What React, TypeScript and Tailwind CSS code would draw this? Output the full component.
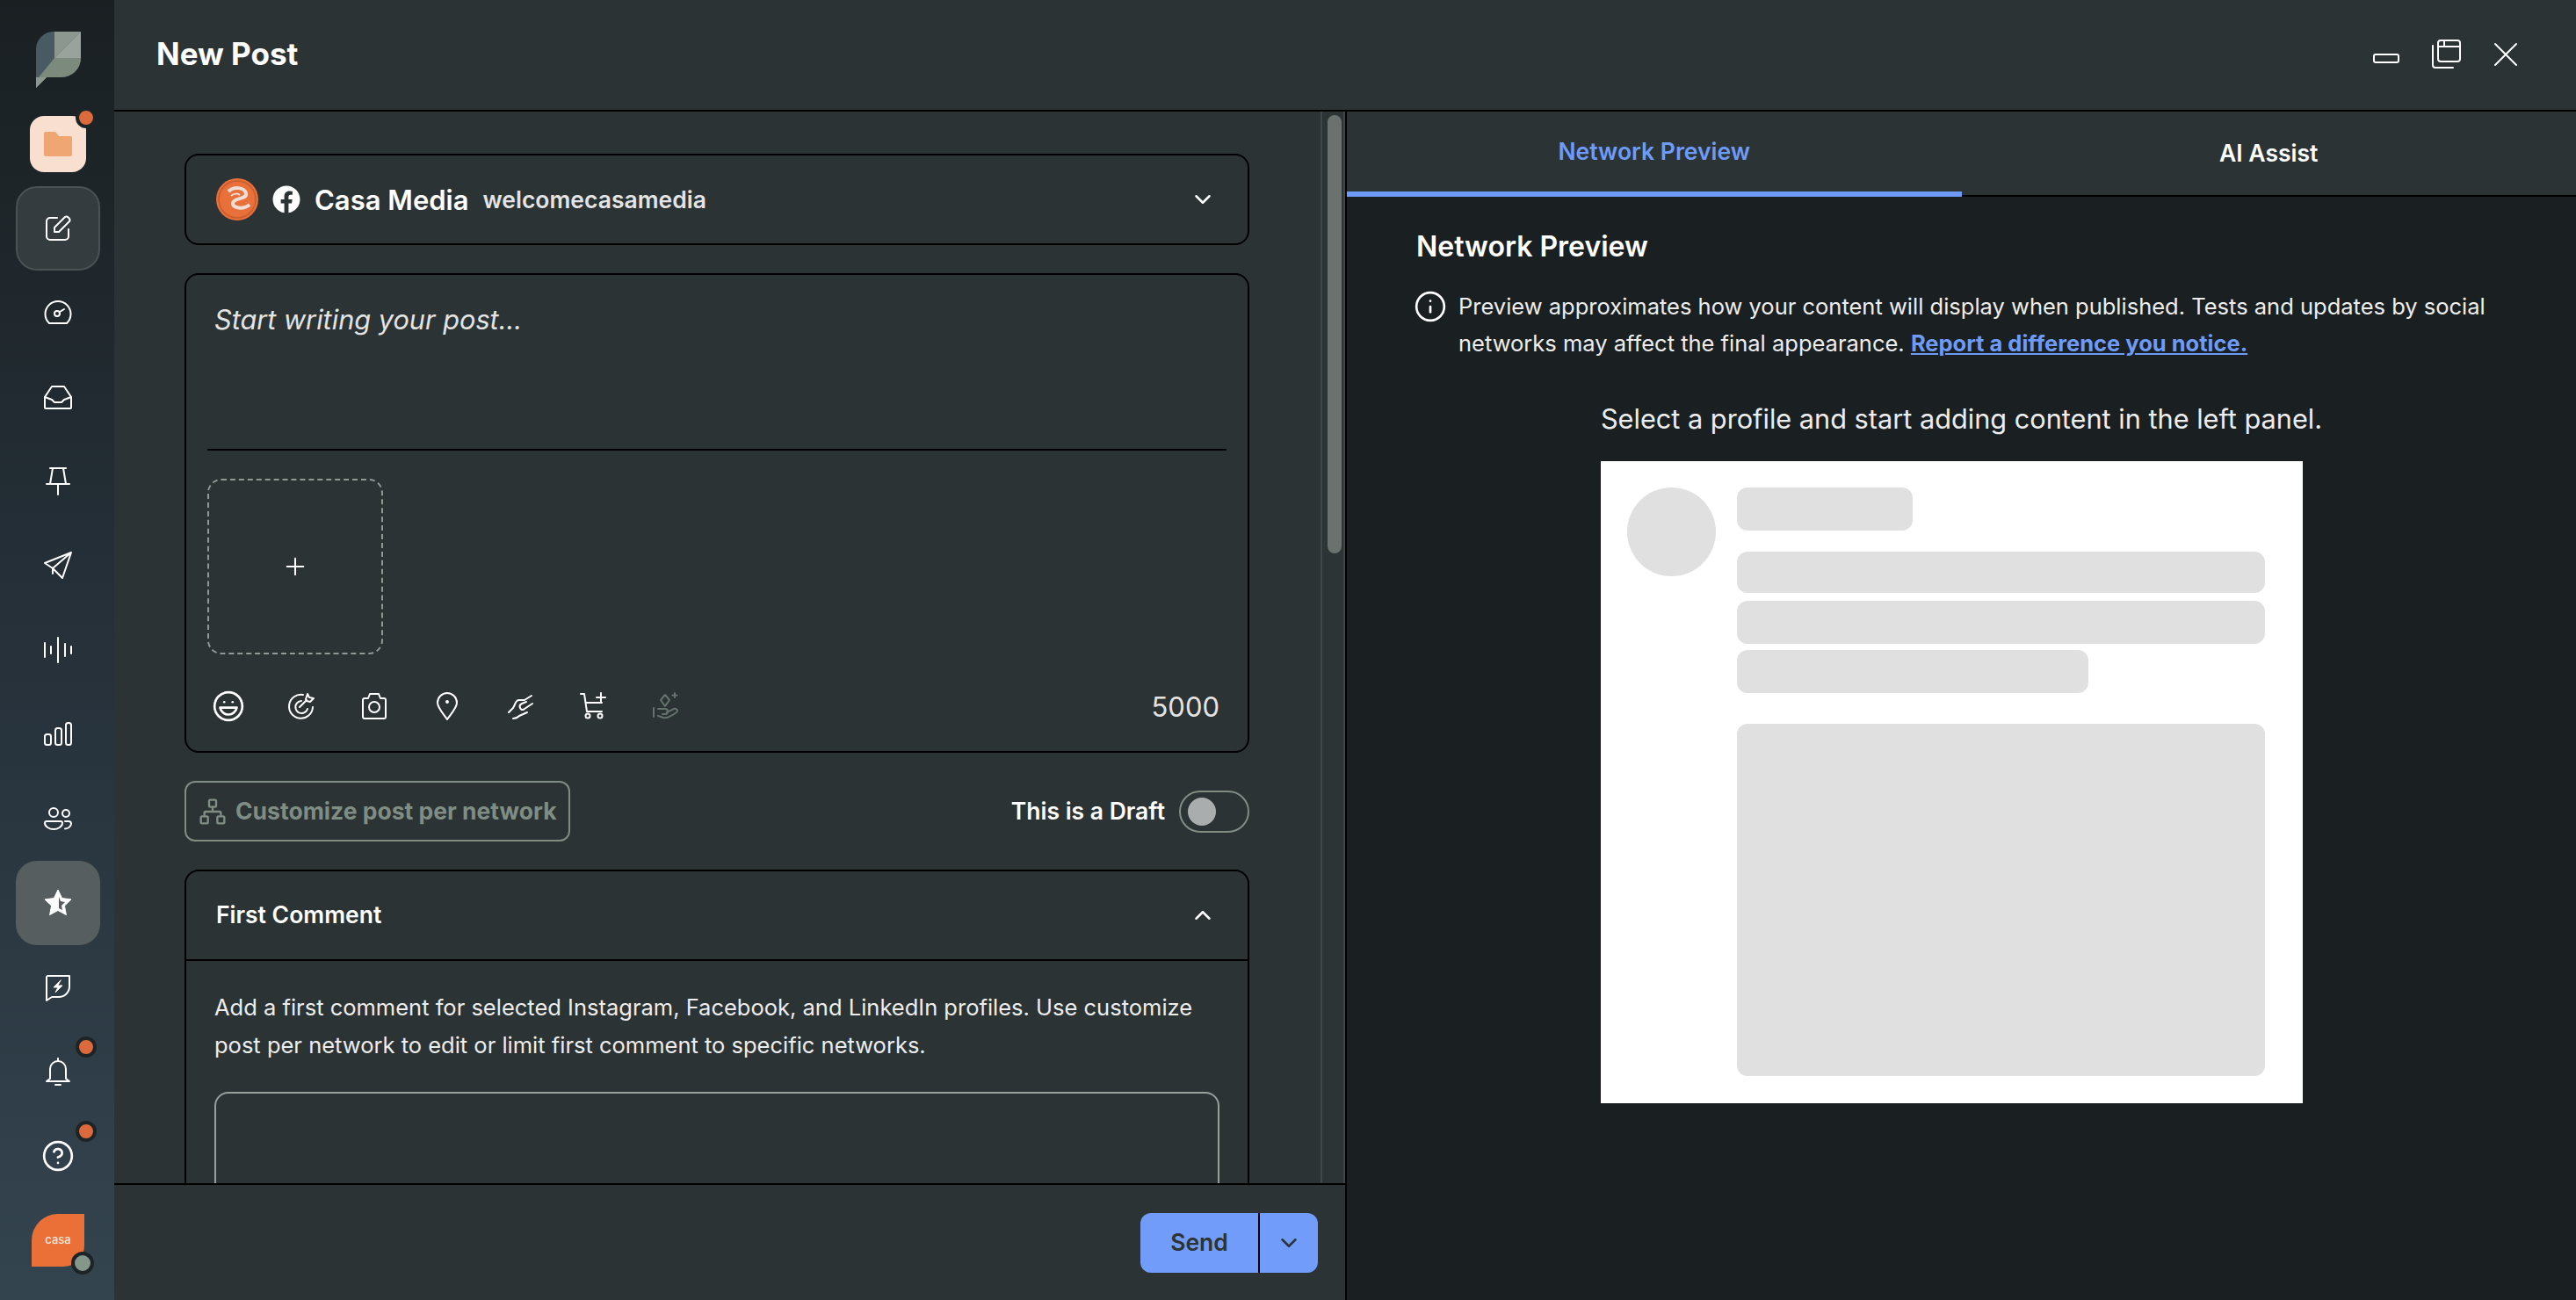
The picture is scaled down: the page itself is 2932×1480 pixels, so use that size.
import type { ReactNode } from "react";
import { ChevronDown, ChevronUp, CircleHelp, Info, Laugh, Network, Plus } from "lucide-react";
import { FaFacebook } from "react-icons/fa";

function Icon({ children, className = "text-white" }: { children: ReactNode; className?: string }) {
  return (
    <svg
      viewBox="0 0 32 32"
      fill="none"
      stroke="currentColor"
      strokeWidth="2"
      strokeLinecap="round"
      strokeLinejoin="round"
      className={`h-8 w-8 shrink-0 ${className}`}
    >
      {children}
    </svg>
  );
}

function Logo() {
  const leaf = "M20 0H52V30A22 22 0 0 1 30 52H13L1 64V20A20 20 0 0 1 20 0Z";
  return (
    <svg viewBox="0 0 52 64" className="h-16 w-[52px]">
      <clipPath id="leaf">
        <path d={leaf} />
      </clipPath>
      <g clipPath="url(#leaf)">
        <rect width="52" height="64" fill="#4a5a63" />
        <polygon points="22,0 52,0 22,30" fill="#8c978f" />
        <polygon points="52,0 52,30 22,30" fill="#99a39b" />
        <polygon points="52,30 52,64 0,64 4,52 22,30" fill="#7b8a7d" />
        <polygon points="0,52 14,52 1,64" fill="#8c978f" />
      </g>
    </svg>
  );
}

function Badge({ className }: { className: string }) {
  return <span className={`absolute h-6 w-6 rounded-full border-4 border-[#1c2427] bg-[#dc6a3c] ${className}`} />;
}

function NavItem({ children, badge }: { children: ReactNode; badge?: string }) {
  return (
    <div className="relative flex h-24 w-full items-center justify-center">
      {children}
      {badge && <Badge className={badge} />}
    </div>
  );
}

function Sidebar() {
  return (
    <aside className="flex h-full w-[130px] shrink-0 flex-col items-center bg-linear-to-b from-[#1a2022] via-[#26313a] to-[#34444f] pt-5 pl-0.5">
      <NavItem>
        <Logo />
      </NavItem>
      <NavItem badge="left-[84px] top-[6px]">
        <div className="flex h-16 w-16 items-center justify-center rounded-2xl bg-[#f8dfd0]">
          <svg viewBox="0 0 32 28" className="h-7 w-8" fill="#efa672">
            <path d="M0 2a2 2 0 0 1 2-2h11l4 5h13a2 2 0 0 1 2 2v19a2 2 0 0 1-2 2H2a2 2 0 0 1-2-2z" />
          </svg>
        </div>
      </NavItem>
      <NavItem>
        <div className="flex h-24 w-24 items-center justify-center rounded-3xl border-2 border-[#4a5255] bg-[#343c3f]">
          <Icon>
            <path d="M15 4H7a4 4 0 0 0-4 4v17a4 4 0 0 0 4 4h17a4 4 0 0 0 4-4v-8" />
            <path d="M12 20v-5L23.5 3.5a3 3 0 0 1 4.2 0l.8.8a3 3 0 0 1 0 4.2L17 20z" />
          </Icon>
        </div>
      </NavItem>
      <NavItem>
        <Icon>
          <path d="M6 28a14.5 14.5 0 1 1 20 0z" />
          <circle cx="15" cy="17" r="3" />
          <path d="M18 15l5-3" />
        </Icon>
      </NavItem>
      <NavItem>
        <Icon>
          <path d="M1 16L9 4h14l8 12v12a1 1 0 0 1-1 1H2a1 1 0 0 1-1-1z" />
          <path d="M1 16l8 3 3 3h8l3-3 8-3" />
        </Icon>
      </NavItem>
      <NavItem>
        <Icon>
          <path d="M7 1h18M10 1L7 19M22 1l3 18M3 19h26M16 19v12" />
        </Icon>
      </NavItem>
      <NavItem>
        <Icon>
          <path d="M31 1L1 13l9 6 11 11zM31 1L10 19v6" />
        </Icon>
      </NavItem>
      <NavItem>
        <Icon>
          <path d="M1 8v16M8 12v8M16 2v28M24 9v14M31 12v8" />
        </Icon>
      </NavItem>
      <NavItem>
        <Icon>
          <rect x="1" y="16" width="7" height="12" rx="2.5" />
          <rect x="13" y="9" width="7" height="19" rx="2.5" />
          <rect x="25" y="3" width="6" height="25" rx="2.5" />
        </Icon>
      </NavItem>
      <NavItem>
        <Icon>
          <circle cx="11" cy="9" r="5" />
          <circle cx="25" cy="10" r="4" />
          <path d="M1 21a2 2 0 0 1 2-2h16a2 2 0 0 1 2 2c0 4-5 7-10 7S1 25 1 21z" />
          <path d="M24 19h4c2 0 3 1 3 2.500 0 3-3 6-7 6" />
        </Icon>
      </NavItem>
      <NavItem>
        <div className="flex h-24 w-24 items-center justify-center rounded-3xl bg-[#565e60]">
          <svg viewBox="0 0 32 32" className="h-8 w-8">
            <path
              d="M16 1l4.600 9.600 10.400 1.300-7.600 7.300 2 10.400L16 24.500 6.600 29.600l2-10.400L1 11.900l10.400-1.300z"
              fill="#fff"
              stroke="#fff"
              strokeLinejoin="round"
            />
            <path d="M17 9l2 5 5 1-4 4 1 5-4-2z" fill="#565e60" />
          </svg>
        </div>
      </NavItem>
      <NavItem>
        <Icon>
          <path d="M4 3h25v12a12 12 0 0 1-12 12H9l-6 4V5a2 2 0 0 1 1-2z" />
          <path d="M19 8l-8 8h5l-3 6 8-8h-5z" fill="currentColor" strokeWidth="1" />
        </Icon>
      </NavItem>
      <NavItem badge="left-[84px] top-2">
        <Icon>
          <path d="M7 24V13a9 9 0 0 1 18 0v11l4 3H3z" />
          <path d="M16 1v3M13 31h6" />
        </Icon>
      </NavItem>
      <NavItem>
        <CircleHelp size={38} strokeWidth={1.7} className="text-white" />
        <Badge className="left-[84px] top-2" />
      </NavItem>
      <NavItem>
        <div className="flex h-[60px] w-[60px] items-center justify-center rounded-tl-[30px] rounded-br-[24px] bg-[#ea7038] text-[13px] font-medium text-[#f6e4da]">
          casa
        </div>
        <span className="absolute left-[79px] top-[61px] h-[26px] w-[26px] rounded-full border-4 border-[#1c2427] bg-[#84978a]" />
      </NavItem>
    </aside>
  );
}

function Header() {
  return (
    <header className="flex h-[127px] shrink-0 items-center justify-between border-b-2 border-black bg-[#2b3335] pr-[62px] pb-0.5 pl-12">
      <h1 className="text-[35px] font-bold text-white">New Post</h1>
      <div className="flex items-center gap-8">
        <svg viewBox="0 0 36 36" className="h-9 w-9 text-white" fill="none" stroke="currentColor" strokeWidth="2">
          <rect x="4" y="18" width="28" height="9" rx="2" />
        </svg>
        <svg viewBox="0 0 36 36" className="h-9 w-9 text-white" fill="none" stroke="currentColor" strokeWidth="2" strokeLinecap="round">
          <rect x="9" y="2" width="25" height="24" rx="3" />
          <path d="M9 9h25M16 2v7M3 8v22a3 3 0 0 0 3 3h20" />
        </svg>
        <svg viewBox="0 0 36 36" className="h-9 w-9 text-white" fill="none" stroke="currentColor" strokeWidth="2" strokeLinecap="round">
          <path d="M6 6l24 24M30 6L6 30" />
        </svg>
      </div>
    </header>
  );
}

function ProfileCard() {
  return (
    <div className="flex h-[104px] items-center rounded-2xl border-2 border-black pr-[36px] pl-[34px]">
      <svg viewBox="0 0 48 48" className="h-12 w-12">
        <circle cx="24" cy="24" r="24" fill="#e8703a" />
        <ellipse cx="24" cy="24" rx="21" ry="21" fill="none" stroke="#c95c2e" strokeWidth="1.500" />
        <path d="M14 15c6-6 18-5 20 2s-14 5-15 11 12 8 19 2" fill="none" stroke="#f1ded4" strokeWidth="4" />
        <path d="M17 20c3-3 8-3 10-1" fill="none" stroke="#f1ded4" strokeWidth="2" />
      </svg>
      <FaFacebook size={32} className="ml-4 text-white" />
      <span className="ml-4 pt-0.5 text-[31px] font-semibold text-white">Casa Media</span>
      <span className="ml-4 pt-0.5 text-[26.500px] font-semibold text-[#e3e4e3]">welcomecasamedia</span>
      <ChevronDown size={30} strokeWidth={2} className="ml-auto text-white" />
    </div>
  );
}

function Composer() {
  return (
    <div className="mt-8 flex h-[546px] flex-col rounded-2xl border-2 border-black px-6">
      <div className="h-[200px] border-b-2 border-black pt-[28px] pl-2">
        <p className="text-[30.700px] text-[#e3e4e3] italic">Start writing your post...</p>
      </div>
      <div className="mt-8 flex h-[200px] w-[200px] items-center justify-center rounded-2xl border-2 border-dashed border-[#8f9a93]">
        <Plus size={32} strokeWidth={1.5} className="text-white" />
      </div>
      <div className="mt-[43px] flex items-center gap-[51px] pr-2 pl-2">
        <Laugh size={38} strokeWidth={1.7} className="-m-[3px] shrink-0 text-white" />
        <Icon>
          <path d="M18 3A13.500 13.500 0 1 0 29 17" />
          <path d="M16 10a7 7 0 1 0 7 9" />
          <path d="M14 17l8-8M21 8l2-6 2 4 5 1-4 4-4-1z" />
        </Icon>
        <Icon>
          <path d="M9 7l2-5h10l2 5h4a2 2 0 0 1 2 2v19a2 2 0 0 1-2 2H5a2 2 0 0 1-2-2V9a2 2 0 0 1 2-2z" />
          <circle cx="16" cy="17" r="6" />
        </Icon>
        <Icon>
          <path d="M16 31C12 25 5 18 5 12a11 11 0 0 1 22 0c0 6-7 13-11 19z" />
          <circle cx="16" cy="11" r="1" fill="currentColor" />
        </Icon>
        <Icon>
          <path d="M29 4l-8 5h-6c-3 0-4 2-5 5l-2 4-5 5" />
          <path d="M30 13l-9 6c-2 2-4 1-5-1s0-4 2-5l5-2" />
          <path d="M8 30c3 0 5-1 7-3l9-4" />
        </Icon>
        <Icon>
          <path d="M2 2h4l3 20h17M8 12h18" />
          <circle cx="10" cy="27" r="2.500" />
          <circle cx="24" cy="27" r="2.500" />
          <path d="M25 1v10M20 6h10" />
        </Icon>
        <Icon className="text-[#64736c]">
          <path d="M15 3l5 6-5 7-5-7zM26 1v5M23.500 3.500h5" />
          <path d="M2 18v10M7 19h8a3 3 0 0 1 0 6h-3M7 27l6 2c4 1 8-1 15-6 2-2 0-5-3-4l-8 4" />
        </Icon>
        <span className="ml-auto text-[31px] leading-none text-[#e3e4e3]">5000</span>
      </div>
    </div>
  );
}

function OptionsRow() {
  return (
    <div className="mt-8 flex items-center justify-between">
      <div className="flex h-[69px] w-[439px] items-center gap-2.5 rounded-xl border-2 border-[#7f8d84] pl-3.5 text-[26.500px] font-bold whitespace-nowrap text-[#7f8d84]">
        <Network size={32} strokeWidth={1.8} className="shrink-0" />
        Customize post per network
      </div>
      <div className="flex items-center gap-4">
        <span className="text-[26.500px] font-semibold text-white">This is a Draft</span>
        <div className="flex h-12 w-20 items-center rounded-full border-2 border-[#7f8d84] pl-2">
          <span className="h-8 w-8 rounded-full bg-[#a9adad]" />
        </div>
      </div>
    </div>
  );
}

function FirstComment() {
  return (
    <div className="mt-8 rounded-2xl border-2 border-black">
      <div className="flex h-[102px] items-center justify-between border-b-2 border-black pr-[36px] pl-[34px]">
        <span className="text-[26.500px] font-semibold text-white">First Comment</span>
        <ChevronUp size={30} strokeWidth={2} className="text-white" />
      </div>
      <div className="px-8 pt-[31px]">
        <p className="text-[25.500px] leading-[43px] text-[#ededed]">
          Add a first comment for selected Instagram, Facebook, and LinkedIn profiles. Use customize post per network
          to edit or limit first comment to specific networks.
        </p>
        <div className="mt-8 h-[200px] rounded-2xl border-2 border-[#9aa19c]" />
      </div>
    </div>
  );
}

function Footer() {
  return (
    <div className="flex h-[133px] shrink-0 items-center justify-end border-t-2 border-black bg-[#2b3335] pr-[31px]">
      <div className="flex h-[68px] w-[202px] items-stretch rounded-xl bg-[#729cf9] text-[#2c3436]">
        <span className="flex w-[134px] items-center justify-center text-[26.500px] font-semibold">Send</span>
        <span className="w-0.5 bg-black" />
        <span className="flex flex-1 items-center justify-center">
          <ChevronDown size={30} strokeWidth={2} />
        </span>
      </div>
    </div>
  );
}

function PreviewSkeleton() {
  return (
    <div className="mt-[26px] flex h-[731px] w-[799px] gap-6 bg-white pt-[30px] pl-[30px]">
      <div className="h-[101px] w-[101px] shrink-0 rounded-full bg-[#dfe0df]" />
      <div className="flex w-[601px] flex-col">
        <div className="h-[49px] w-[200px] rounded-xl bg-[#dfe0df]" />
        <div className="mt-6 h-[47px] rounded-xl bg-[#dfe0df]" />
        <div className="mt-[9px] h-[49px] rounded-xl bg-[#dfe0df]" />
        <div className="mt-[7px] h-[49px] w-[400px] rounded-xl bg-[#dfe0df]" />
        <div className="mt-[35px] h-[401px] rounded-xl bg-[#dfe0df]" />
      </div>
    </div>
  );
}

function PreviewPanel() {
  return (
    <section className="flex min-w-0 flex-1 flex-col border-l-2 border-black bg-[#1a2022]">
      <div className="flex h-[97px] shrink-0 bg-[#2b3335] text-[26.500px] font-semibold">
        <div className="flex w-1/2 items-center justify-center border-b-[6px] border-[#6f9bf8] text-[#6f9bf8]">
          Network Preview
        </div>
        <div className="flex w-1/2 items-center justify-center border-b-2 border-black text-white">AI Assist</div>
      </div>
      <div className="px-[79px] pt-9">
        <h2 className="text-[32px] leading-[42px] font-semibold text-white">Network Preview</h2>
        <div className="mt-7 flex gap-4">
          <Info size={38} strokeWidth={1.7} className="-mx-[3px] shrink-0 text-white" />
          <p className="-mt-0.5 w-[1200px] text-[25.500px] leading-[42px] text-[#ededed]">
            Preview approximates how your content will display when published. Tests and updates by social networks may
            affect the final appearance.{" "}
            <span className="font-bold text-[#6f9bf8] underline">Report a difference you notice.</span>
          </p>
        </div>
      </div>
      <div className="mt-[43px] flex w-fit flex-col self-center">
        <p className="text-[30.700px] leading-[44px] text-[#ededed]">Select a profile and start adding content in the left panel.</p>
        <PreviewSkeleton />
      </div>
    </section>
  );
}

export default function App() {
  return (
    <div className="flex h-[1480px] w-[2932px] overflow-hidden bg-[#2b3335] font-[Inter,sans-serif]">
      <Sidebar />
      <main className="flex min-w-0 flex-1 flex-col">
        <Header />
        <div className="flex min-h-0 flex-1">
          <section className="flex w-[1401px] shrink-0 flex-col">
            <div className="flex min-h-0 flex-1">
              <div className="min-w-0 flex-1 overflow-hidden pt-12 pr-[81px] pl-20">
                <ProfileCard />
                <Composer />
                <OptionsRow />
                <FirstComment />
              </div>
              <div className="w-7 shrink-0 border-x-2 border-[#3f4749] bg-[#2d3436] pt-1 pl-1.5">
                <div className="h-[499px] w-4 rounded-full bg-[#6b716f]" />
              </div>
            </div>
            <Footer />
          </section>
          <PreviewPanel />
        </div>
      </main>
    </div>
  );
}
